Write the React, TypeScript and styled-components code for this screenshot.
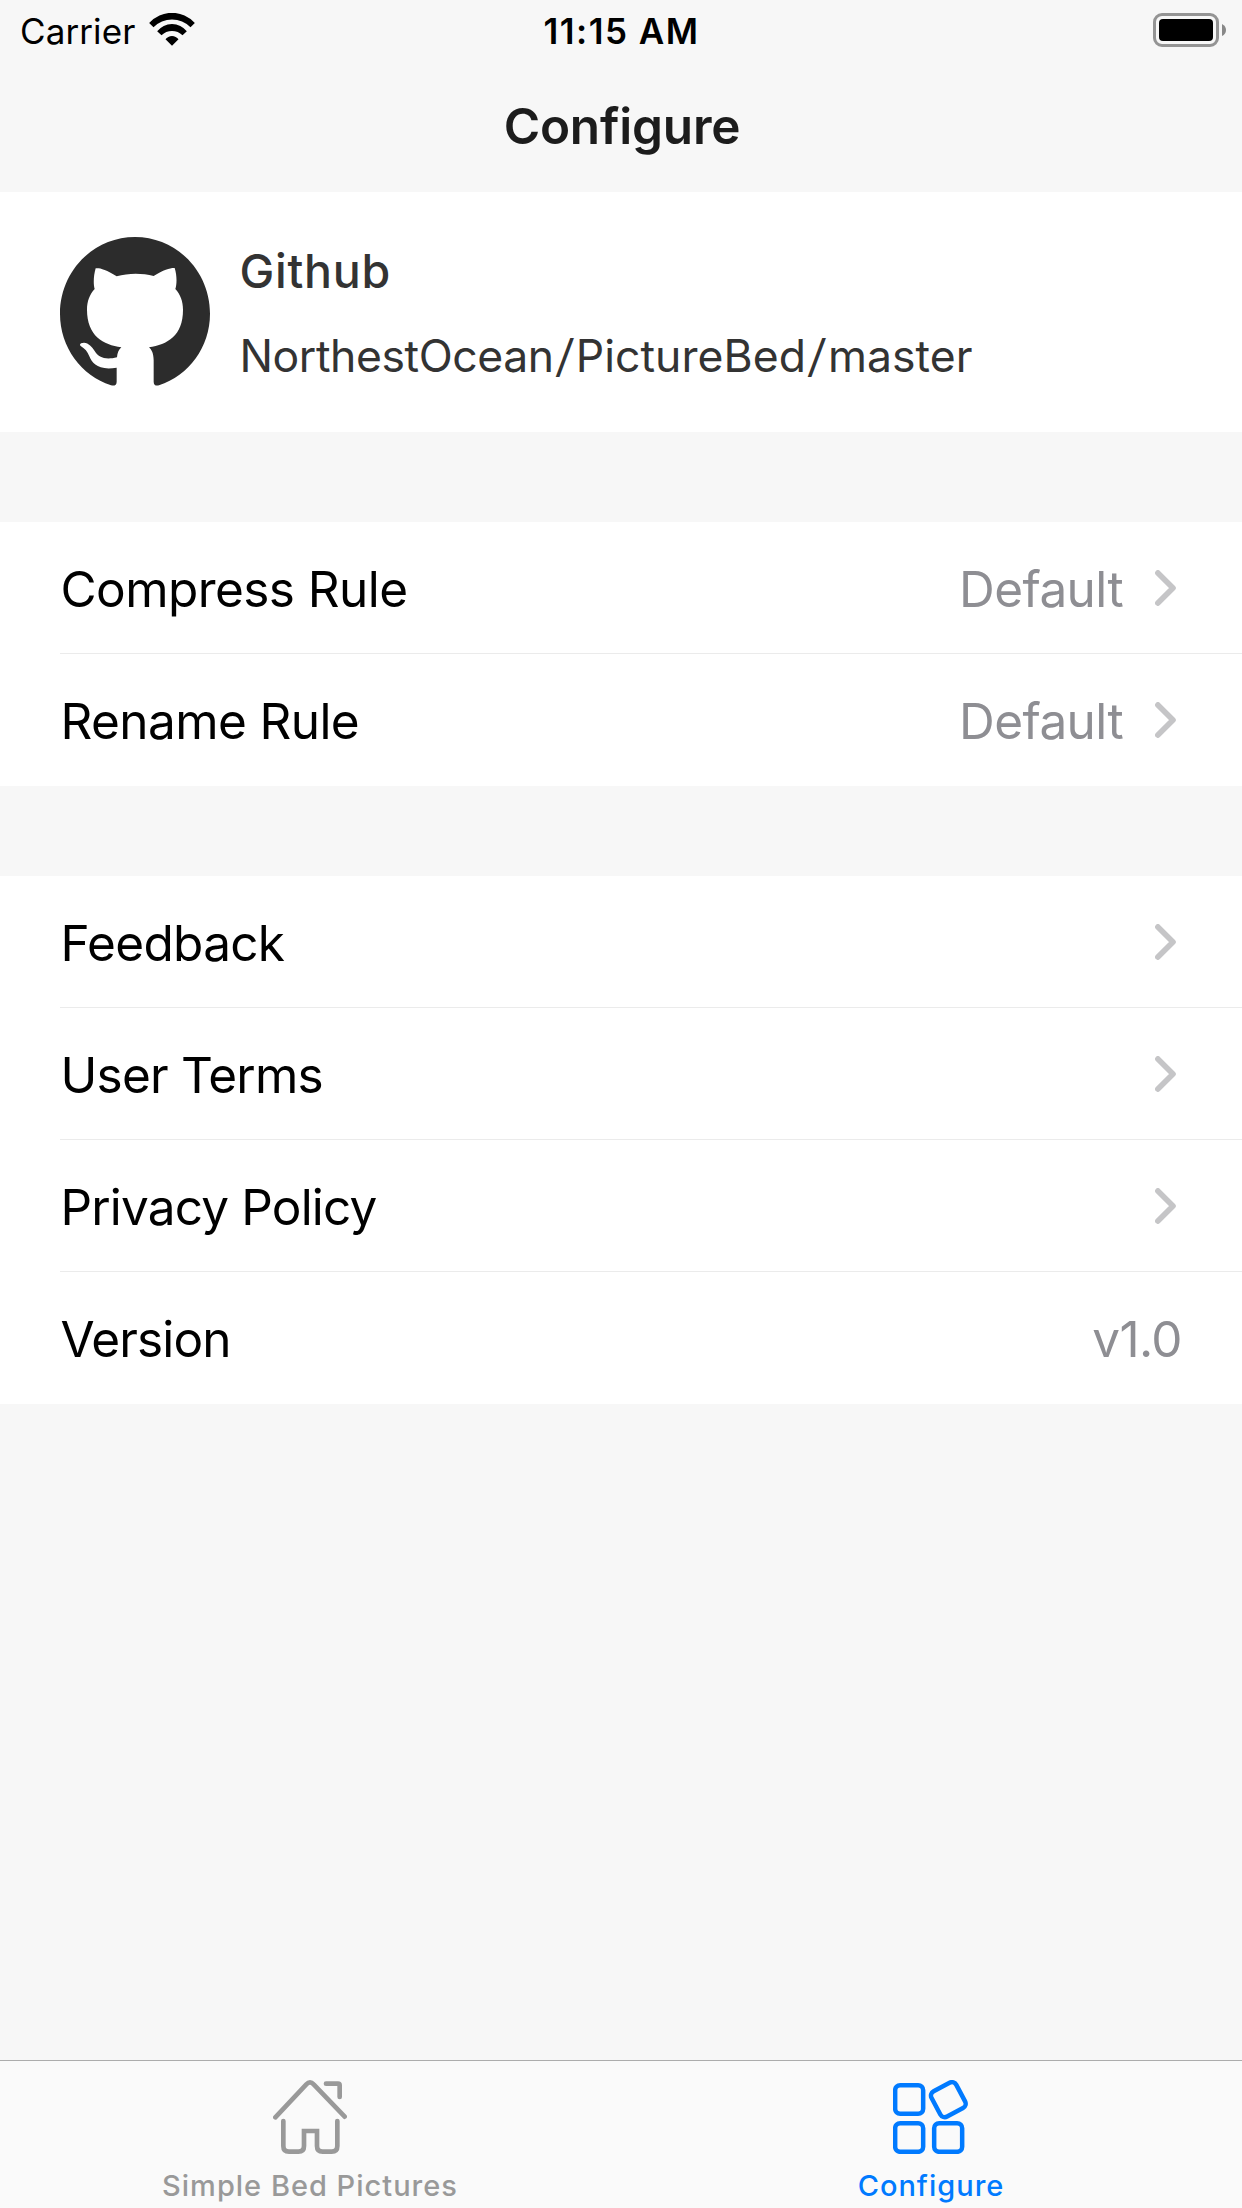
import React from 'react';
import styled, { createGlobalStyle } from 'styled-components';

const GlobalStyle = createGlobalStyle`
  *, *::before, *::after { box-sizing: border-box; }
  body { margin: 0; background: #f7f7f7; font-family: Inter, "Liberation Sans", sans-serif; }
  svg { display: block; flex: none; }
`;

const Screen = styled.div`
  display: flex;
  flex-direction: column;
  width: 1242px;
  height: 2208px;
  background: #f7f7f7;
  overflow: hidden;
`;

const StatusBar = styled.div`
  display: grid;
  grid-template-columns: 1fr auto 1fr;
  align-items: center;
  height: 62px;
  padding: 0 16px 0 20px;
  font-size: 35px;
  line-height: 42px;
  color: #000;
`;

const Network = styled.div`
  display: flex;
  align-items: center;
  gap: 14px;
  letter-spacing: 0.1px;

  svg { margin-bottom: 3px; }
`;

const Clock = styled.time`
  margin-right: 3px;
  font-weight: 600;
  letter-spacing: 1.49px;
`;

const Power = styled.div`
  display: flex;
  justify-content: flex-end;
  margin-bottom: 2px;
`;

const NavBar = styled.header`
  display: flex;
  align-items: center;
  justify-content: center;
  height: 130px;
  padding: 0 0 2px 2px;
`;

const Title = styled.h1`
  margin: 0;
  font-size: 49.5px;
  font-weight: 600;
  line-height: 60px;
  letter-spacing: -0.2px;
  color: #1c1c1c;
`;

const Content = styled.main`
  display: flex;
  flex-direction: column;
  flex: 1;
  gap: 90px;
`;

const Profile = styled.section`
  display: flex;
  align-items: center;
  gap: 29.5px;
  height: 240px;
  padding: 0 60px;
  background: #fff;
  color: #333;
`;

const ProfileText = styled.div`
  display: flex;
  flex-direction: column;
  gap: 30px;
  padding-top: 2px;
`;

const Service = styled.div`
  font-size: 46.5px;
  font-weight: 500;
  line-height: 56px;
  letter-spacing: 0.74px;
`;

const Repository = styled.div`
  display: flex;
  font-size: 44.5px;
  line-height: 54px;
`;

const Segment = styled.span<{ $tracking: number }>`
  letter-spacing: ${(p) => p.$tracking}px;
`;

const Slash = styled.span`
  width: 22px;
  text-align: center;
  transform: skewX(-6deg);
`;

const Group = styled.section`
  display: flex;
  flex-direction: column;
  padding-left: 60px;
  background: #fff;
`;

const Row = styled.div`
  display: flex;
  align-items: center;
  height: 132px;
  padding-right: 60px;
  font-size: 49.5px;
  line-height: 60px;
  box-shadow: inset 0 -1px 0 #ebebeb;

  &:last-child { box-shadow: none; }
`;

const Label = styled.span<{ $tracking: number }>`
  flex: 1;
  padding: 2px 0 0 0.5px;
  letter-spacing: ${(p) => p.$tracking}px;
  color: #000;
`;

const Value = styled.span`
  padding-top: 2px;
  letter-spacing: -0.6px;
  color: #8e8e93;
`;

const Disclosure = styled.span`
  margin: 0 6px 0 32px;
`;

const TabBar = styled.nav`
  display: grid;
  grid-template-columns: 1fr 1fr;
  height: 148px;
  border-top: 1px solid #acacac;
  background: #fafafa;
`;

const Tab = styled.div<{ $active?: boolean }>`
  display: flex;
  flex-direction: column;
  align-items: center;
  gap: 14px;
  padding: 19px 1px 0 0;
  color: ${(p) => (p.$active ? '#007aff' : '#999')};
`;

const TabLabel = styled.span`
  font-size: 29px;
  font-weight: 500;
  line-height: 35px;
  letter-spacing: 1px;
  white-space: nowrap;
`;

const WifiIcon = () => (
  <svg width="46" height="33" viewBox="0 0 137 99">
    <path d="M0 30A92 92 0 0 1 137 30L124 43A78 78 0 0 0 13 43Z" />
    <path d="M24 55A56 56 0 0 1 113 55L100 67A45 45 0 0 0 37 67Z" />
    <path d="M49 79A24 24 0 0 1 88 79L70 97Q68.500 99 67 97Z" />
  </svg>
);

const BatteryIcon = () => (
  <svg width="73" height="34" viewBox="0 0 73 34">
    <rect x="1.500" y="1.500" width="63" height="31" rx="7.500" fill="none" stroke="#949494" strokeWidth="3" />
    <rect x="6" y="6" width="54" height="22" rx="4" />
    <path d="M69 11Q73 13 73 17Q73 21 69 23Z" fill="#888" />
  </svg>
);

const OctocatIcon = () => (
  <svg width="150" height="150" viewBox="0 0 450 450" fill="#2c2c2c">
    <path d="M225 0C100 0 0 103 0 230C0 331 64 415 153 445C164 448 170 443 170 434V392C115 401 97 380 88 358C82 344 75 335 63 328C56 322 62 317 72 317C86 318 96 329 104 342C116 361 135 370 171 361C172 349 176 338 184 331C130 323 81 297 81 218C81 193 89 172 104 156C100 143 100 118 107 94C115 92 136 95 170 118C205 108 246 108 281 117C312 97 333 92 344 93C351 115 351 140 346 156C361 172 369 193 369 218C369 297 322 322 267 331C275 338 281 350 281 370V434C281 443 287 448 297 445C386 415 450 331 450 230C450 103 350 0 225 0Z" />
  </svg>
);

const ChevronIcon = () => (
  <svg width="21" height="36" viewBox="0 0 21 36" fill="none" stroke="#c5c5c7" strokeWidth="5.600" strokeLinecap="round" strokeLinejoin="round">
    <path d="M2.900 2.900L18 18L2.900 33.100" />
  </svg>
);

const HomeIcon = () => (
  <svg width="74" height="74" viewBox="0 0 222 222" fill="none" stroke="currentColor" strokeWidth="14" strokeLinecap="round">
    <path d="M7 112L100 13Q111 1 122 13L215 110" />
    <path d="M159 11H195Q200 11 200 16V51" />
    <path d="M31 123V198Q31 215 48 215H76Q93 215 93 198V153H132V198Q132 215 149 215H176Q193 215 193 198V123" />
  </svg>
);

const BlocksIcon = () => (
  <svg width="77" height="74" viewBox="0 0 231 222" fill="none" stroke="currentColor" strokeWidth="13.500">
    <rect x="6.500" y="15.500" width="84" height="86" rx="15" />
    <rect x="6.500" y="129.500" width="84" height="86" rx="15" />
    <rect x="123.500" y="129.500" width="84" height="86" rx="15" />
    <rect x="124" y="16" width="84" height="86" rx="15" transform="rotate(-28 166 59)" />
  </svg>
);

type Item = { label: string; tracking: number; value?: string; link?: boolean };

const rules: Item[] = [
  { label: 'Compress Rule', tracking: -0.57, value: 'Default', link: true },
  { label: 'Rename Rule', tracking: -0.6, value: 'Default', link: true },
];

const about: Item[] = [
  { label: 'Feedback', tracking: -0.69, link: true },
  { label: 'User Terms', tracking: -0.78, link: true },
  { label: 'Privacy Policy', tracking: -0.83, link: true },
  { label: 'Version', tracking: -0.85, value: 'v1.0' },
];

const Settings = ({ items }: { items: Item[] }) => (
  <Group>
    {items.map((item) => (
      <Row key={item.label}>
        <Label $tracking={item.tracking}>{item.label}</Label>
        {item.value && <Value>{item.value}</Value>}
        {item.link && (
          <Disclosure>
            <ChevronIcon />
          </Disclosure>
        )}
      </Row>
    ))}
  </Group>
);

export default function App() {
  return (
    <>
      <GlobalStyle />
      <Screen>
        <StatusBar>
          <Network>
            <span>Carrier</span>
            <WifiIcon />
          </Network>
          <Clock>11:15 AM</Clock>
          <Power>
            <BatteryIcon />
          </Power>
        </StatusBar>
        <NavBar>
          <Title>Configure</Title>
        </NavBar>
        <Content>
          <Profile>
            <OctocatIcon />
            <ProfileText>
              <Service>Github</Service>
              <Repository>
                <Segment $tracking={-0.42}>NorthestOcean</Segment>
                <Slash>/</Slash>
                <Segment $tracking={0.05}>PictureBed</Segment>
                <Slash>/</Slash>
                <Segment $tracking={0.05}>master</Segment>
              </Repository>
            </ProfileText>
          </Profile>
          <Settings items={rules} />
          <Settings items={about} />
        </Content>
        <TabBar>
          <Tab>
            <HomeIcon />
            <TabLabel>Simple Bed Pictures</TabLabel>
          </Tab>
          <Tab $active>
            <BlocksIcon />
            <TabLabel>Configure</TabLabel>
          </Tab>
        </TabBar>
      </Screen>
    </>
  );
}
